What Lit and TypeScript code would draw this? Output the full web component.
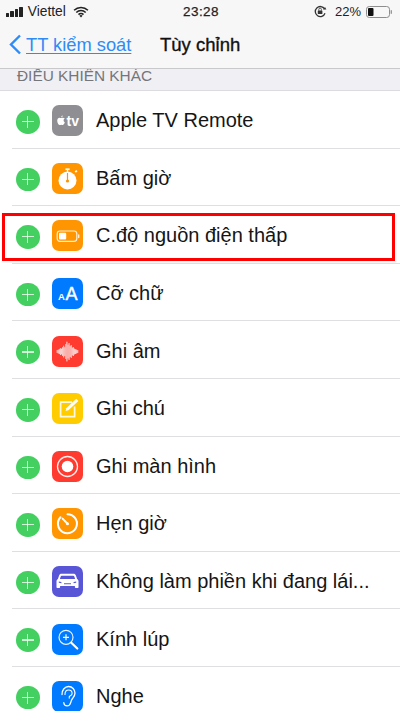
import { LitElement, html, css, svg } from "lit";
import { customElement } from "lit/decorators.js";

const W = "#fff";
const waveHeights = [1, 1.5, 2, 3, 2.5, 4, 5.5, 4, 7, 9.5, 6.5, 8, 5, 6, 3.5, 4, 2.5, 2, 1.5, 1];
const icons: Record<string, unknown> = {
  tv: svg`<path fill="${W}" d="M10.7 12.7c-.6 0-.9.4-1.5.4s-1-.4-1.6-.4c-1.2 0-2.4 1.1-2.4 3 0 2 1.4 4.4 2.5 4.4.6 0 .9-.4 1.5-.4s.9.4 1.4.4c1 0 1.9-1.7 2.2-2.8-1.6-.7-1.7-3 0-3.7-.4-.6-1.2-.9-2.1-.9zM9.3 12.3c.8 0 1.5-.9 1.4-1.9-.8.1-1.6.9-1.4 1.9z"/>
  <text x="14.5" y="20.5" fill="${W}" class="tvt">tv</text>`,
  stopwatch: svg`<circle cx="15.5" cy="17.5" r="9" fill="${W}"/><rect x="13.4" y="5.4" width="4.2" height="1.7" fill="${W}"/><rect x="14.9" y="6.8" width="1.2" height="2.5" fill="${W}"/><path d="M22.6 8.4l1.6-1.4 1.3 1.3-1.6 1.4z" fill="${W}"/><rect x="14.9" y="10" width="1.2" height="8" fill="#ff9500"/><circle cx="15.5" cy="18" r="1.6" fill="#ff9500"/>`,
  battery: svg`<rect x="5.2" y="11" width="19.6" height="10.4" rx="2.8" fill="none" stroke="${W}" stroke-opacity=".85" stroke-width="1.2"/><rect x="7" y="12.8" width="7.2" height="6.8" rx="1.1" fill="${W}"/><rect x="26" y="14.2" width="1.4" height="4" rx=".7" fill="${W}" fill-opacity=".85"/>`,
  text: svg`<text x="6" y="22" fill="${W}" class="aa1">A</text><text x="13.4" y="22" fill="${W}" class="aa2">A</text>`,
  wave: svg`<g stroke="#f8cfcc" stroke-width="1.15" stroke-linecap="round">${waveHeights.map(
    (h, i) => svg`<line x1="${5.2 + i * 1.08}" x2="${5.2 + i * 1.08}" y1="${15.5 - h}" y2="${15.5 + h}"/>`
  )}</g>`,
  note: svg`<path d="M20 9.2H8.6v14.4h14V13.5" fill="none" stroke="${W}" stroke-opacity=".88" stroke-width="1.7"/><path d="M13.6 18l.7-2.8 10-9.4 2.1 2.1-10 9.4z" fill="${W}"/>`,
  record: svg`<circle cx="15.5" cy="15.5" r="10" fill="none" stroke="${W}" stroke-opacity=".9" stroke-width="1.3"/><circle cx="15.5" cy="15.5" r="5.8" fill="${W}"/>`,
  timer: svg`<path d="M15.5 6.2a9.5 9.5 0 1 1-7 3" fill="none" stroke="${W}" stroke-width="2" stroke-linecap="round"/><path d="M15.5 15.7L10.6 10.6" stroke="${W}" stroke-width="2" stroke-linecap="round"/><circle cx="15.5" cy="15.7" r="1.5" fill="${W}"/>`,
  car: svg`<path fill="${W}" fill-rule="evenodd" d="M9.5 7.8h12c1.2 0 2 .6 2.4 1.7l1.2 3.5c1 .6 1.4 1.4 1.4 2.5v5.7c0 .5-.3.8-.8.8h-2c-.5 0-.8-.3-.8-.8v-1.2H8.1v1.2c0 .5-.3.8-.8.8h-2c-.5 0-.8-.3-.8-.8v-5.7c0-1.1.4-1.9 1.4-2.5l1.2-3.5c.4-1.1 1.2-1.7 2.4-1.7zm.2 1.9c-.5 0-.8.2-1 .7l-.8 2.5h15.2l-.8-2.5c-.2-.5-.5-.7-1-.7zM6.8 15.4v1.3l2.6.5v-1.1zm17.4 0l-2.6.7v1.1l2.6-.5zM12 17.2v1h7v-1z"/>`,
  zoom: svg`<circle cx="14" cy="13.3" r="7" fill="none" stroke="${W}" stroke-opacity=".9" stroke-width="1.2"/><path d="M14 10.3v6M11 13.3h6" stroke="${W}" stroke-width="1.2"/><path d="M19.3 18.8l6 5.7" stroke="${W}" stroke-width="2.2" stroke-linecap="round"/>`,
  ear: svg`<path d="M10 13.5c0-4.6 2.8-8 6.6-8 3.7 0 6.4 3 6.4 6.6 0 2.4-1 3.8-2.3 5.2-1.3 1.3-1.5 2.5-2 4.4-.5 2-1.8 3.2-3.6 3.2-1.9 0-3.1-1.3-3.3-3.2" fill="none" stroke="${W}" stroke-width="1.3" stroke-linecap="round"/><path d="M13 13.5c0-2.5 1.5-4.5 3.6-4.5s3.5 1.6 3.5 3.4c0 1.4-1 2-1.9 2.3-1 .4-1.2 1.3-1 2.4" fill="none" stroke="${W}" stroke-width="1.1" stroke-linecap="round"/>`,
};

const rows = [
  ["tv", "#8e8e93", "Apple TV Remote"],
  ["stopwatch", "#ff9500", "Bấm giờ"],
  ["battery", "#ff9500", "C.độ nguồn điện thấp"],
  ["text", "#007aff", "Cỡ chữ"],
  ["wave", "#ff3b30", "Ghi âm"],
  ["note", "#ffcc00", "Ghi chú"],
  ["record", "#ff3b30", "Ghi màn hình"],
  ["timer", "#ff9500", "Hẹn giờ"],
  ["car", "#5856d6", "Không làm phiền khi đang lái..."],
  ["zoom", "#007aff", "Kính lúp"],
  ["ear", "#007aff", "Nghe"],
];

@customElement("app-root")
export class AppRoot extends LitElement {
  static styles = css`
    :host {
      display: block;
      position: relative;
      width: 400px;
      height: 711px;
      overflow: hidden;
      background: #fff;
      font-family: "Liberation Sans", Arial, sans-serif;
      color: #111;
    }
    .top { height: 68px; background: #f7f7f8; border-bottom: 1px solid #c9c9cc; }
    .status { height: 23px; display: grid; grid-template-columns: 1fr auto 1fr; align-items: center; font-size: 13.8px; color: #222; }
    .status > div { display: flex; align-items: center; }
    .left { padding-left: 6px; gap: 5px; }
    .bars { display: flex; align-items: flex-end; gap: 1.2px; height: 10px; }
    .bars i { width: 3.3px; background: #222; border-radius: .5px; }
    .wifi { margin-left: 2px; }
    .time { font-size: 13.5px; letter-spacing: .4px; padding-left: 2px; -webkit-text-stroke: .25px #222; }
    .right { justify-content: flex-end; gap: 5px; padding-right: 8px; font-size: 13px; }
    .rot { margin-right: 3px; }
    .nav { height: 43px; display: flex; align-items: center; }
    .back { display: flex; align-items: center; color: #2f8bf5; padding-left: 9px; width: 160px; box-sizing: border-box; gap: 4px; font-size: 18.3px; }
    .back span { text-decoration: underline; text-decoration-thickness: 1px; text-underline-offset: 2px; }
    .title { font-size: 18.5px; -webkit-text-stroke: .35px #111; }
    .section { height: 22px; box-sizing: border-box; background: #f0f0f4; border-bottom: 1px solid #dcdce0; padding-left: 17px; font-size: 15.4px; line-height: 13px; color: #75757a; overflow: hidden; white-space: nowrap; }
    .row { height: 57.6px; box-sizing: border-box; position: relative; display: flex; align-items: center; padding: 2px 0 0 16px; }
    .row::after { content: ""; position: absolute; left: 12px; right: 0; bottom: 0; height: 1px; background: #dfdfe2; }
    .plus { width: 23.5px; height: 23.5px; margin-top: 2px; border-radius: 50%; background: #43d060; position: relative; flex: none; }
    .plus::before, .plus::after { content: ""; position: absolute; background: #fff; opacity: .75; }
    .plus::before { left: 5.75px; right: 5.75px; top: 11px; height: 1.2px; }
    .plus::after { top: 5.75px; bottom: 5.75px; left: 11px; width: 1.2px; }
    .icon { width: 31px; height: 31px; border-radius: 7px; margin-left: 12.5px; flex: none; display: block; }
    .label { margin: 0 0 0 13px; font-size: 20px; white-space: nowrap; color: #151515; }
    .tvt { font: 700 14px "Liberation Sans", Arial, sans-serif; }
    .aa1 { font: 700 9.5px "Liberation Sans", Arial, sans-serif; }
    .aa2 { font: 400 18px "Liberation Sans", Arial, sans-serif; stroke: #fff; stroke-width: .4px; }
    .mark { position: absolute; left: 1.5px; top: 213px; width: 393px; height: 48px; box-sizing: border-box; border: 3px solid #f00; }
  `;

  render() {
    return html`
      <div class="top">
        <div class="status">
          <div class="left">
            <span class="bars"><i style="height:4px"></i><i style="height:6px"></i><i style="height:8px"></i><i style="height:10px"></i></span>
            <span>Viettel</span>
            <svg class="wifi" width="16" height="12" viewBox="0 0 17 13">
              <path d="M1 4.6a10.8 10.8 0 0 1 15 0M3.4 7a7.3 7.3 0 0 1 10.2 0M5.8 9.3a3.8 3.8 0 0 1 5.4 0" fill="none" stroke="#222" stroke-width="1.7"/>
              <path d="M8.5 12.5l-1.7-1.9a2.4 2.4 0 0 1 3.4 0z" fill="#222"/>
            </svg>
          </div>
          <div class="time">23:28</div>
          <div class="right">
            <svg class="rot" width="13" height="13" viewBox="0 0 13 13">
              <path d="M10.6 4A5 5 0 1 0 11 8.2" fill="none" stroke="#333" stroke-width="1.3"/>
              <path d="M9 4.6h3.4L11 2z" fill="#333"/>
              <rect x="3.8" y="5.6" width="4.6" height="3.4" rx=".5" fill="#333"/>
              <path d="M4.8 5.6V4.4a1.3 1.3 0 0 1 2.6 0v1.2" fill="none" stroke="#333" stroke-width=".8"/>
            </svg>
            <span>22%</span>
            <svg width="26" height="12" viewBox="0 0 26 12">
              <rect x=".5" y=".5" width="23" height="11" rx="2.8" fill="none" stroke="#8d8d8d"/>
              <rect x="2" y="2" width="5.5" height="8" rx="1" fill="#111"/>
              <rect x="24.6" y="4" width="1.4" height="4" rx=".7" fill="#999"/>
            </svg>
          </div>
        </div>
        <div class="nav">
          <div class="back">
            <svg width="13" height="21" viewBox="0 0 13 21"><path d="M11 1.5L2 10.5l9 9" fill="none" stroke="#2f8bf5" stroke-width="2.4"/></svg>
            <span>TT kiểm soát</span>
          </div>
          <div class="title">Tùy chỉnh</div>
        </div>
      </div>
      <div class="section">ĐIỀU KHIỂN KHÁC</div>
      ${rows.map(
        ([ic, bg, label]) => html`
          <div class="row">
            <span class="plus"></span>
            <svg class="icon" viewBox="0 0 31 31" style="background:${bg}">${icons[ic]}</svg>
            <span class="label">${label}</span>
          </div>
        `
      )}
      <div class="mark"></div>
    `;
  }
}
